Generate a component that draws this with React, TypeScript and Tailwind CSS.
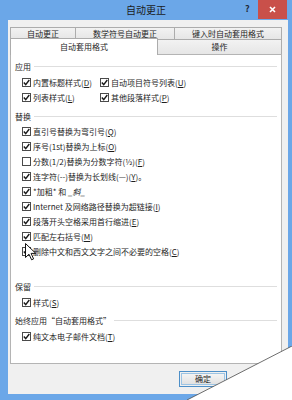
import React from 'react';

const font = { fontFamily: '"Noto Sans CJK SC", "Liberation Sans", sans-serif' };

function Box({ checked = true }: { checked?: boolean }) {
  return (
    <span className="w-[9px] h-[9px] shrink-0 border border-[#4a4a4a] bg-white flex items-center justify-center">
      {checked && (
        <svg width="7" height="7" viewBox="0 0 7 7">
          <path d="M0.8 3.6 L2.7 5.6 L6.3 1" fill="none" stroke="#1a1a1a" strokeWidth="1.4" />
        </svg>
      )}
    </span>
  );
}

function Key({ k }: { k: string }) {
  return (
    <>
      (<span className="underline">{k}</span>)
    </>
  );
}

function Check({ label, k, tail, checked = true, className = '' }: { label: React.ReactNode; k?: string; tail?: string; checked?: boolean; className?: string }) {
  return (
    <div className={`h-[15px] flex items-center gap-[2px] ${className}`}>
      <Box checked={checked} />
      <span className="whitespace-nowrap">
        {label}
        {k && <Key k={k} />}
        {tail}
      </span>
    </div>
  );
}

function Section({ title, className = '' }: { title: string; className?: string }) {
  return (
    <div className={`h-[15px] flex items-center pl-[4px] pr-[4px] ${className}`}>
      <span className="whitespace-nowrap">{title}</span>
      <div className="flex-1 h-px bg-[#dedede] ml-[3px]" />
    </div>
  );
}

function Tab({ label, className = '' }: { label: string; className?: string }) {
  return (
    <div className={`flex items-center justify-center border border-[#acacac] bg-gradient-to-b from-[#f2f2f2] to-[#e6e6e6] ${className}`}>
      {label}
    </div>
  );
}

export default function App() {
  return (
    <div className="relative w-[292px] h-[400px] overflow-hidden bg-[#6ba7e8] flex flex-col text-[#1e1e1e]" style={font}>
      <div className="h-[20px] relative flex items-center justify-center shrink-0">
        <span className="text-[10px] text-[#1b1b1b] leading-none">自动更正</span>
        <span className="absolute left-[245px] top-[4px] text-[9px] font-bold text-[#1f2a3a] leading-none">?</span>
        <div className="absolute left-[258px] top-0 w-[29px] h-[19px] bg-[#c9504a] flex items-center justify-center">
          <svg width="7" height="7" viewBox="0 0 7 7">
            <path d="M1 1 L6 6 M6 1 L1 6" stroke="white" strokeWidth="1.6" />
          </svg>
        </div>
      </div>

      <div className="flex-1 ml-[8px] mr-[4px] mb-[6px] bg-[#f0f0f0] flex flex-col pl-[2px] pr-[6px] pt-[7px] text-[8px] leading-none">
        <div className="flex h-[13px]">
          <Tab label="自动更正" className="w-[66px]" />
          <Tab label="数学符号自动更正" className="w-[100px] -ml-px" />
          <Tab label="键入时自动套用格式" className="flex-1 -ml-px" />
        </div>
        <div className="flex h-[15px] items-end -mt-px">
          <div className="w-[148px] h-[17px] bg-white border border-[#acacac] border-b-0 flex items-center justify-center relative z-10 -mb-px">
            自动套用格式
          </div>
          <Tab label="操作" className="flex-1 h-[15px] -ml-px border-b-0" />
        </div>

        <div className="h-[310px] bg-white border border-[#b4b4b4] flex flex-col pt-[4px]">
          <Section title="应用" />
          <div className="flex mt-[1px] pl-[11px]">
            <div className="w-[78px]">
              <Check label="内置标题样式" k="D" />
              <Check label="列表样式" k="L" />
            </div>
            <div>
              <Check label="自动项目符号列表" k="U" />
              <Check label="其他段落样式" k="P" />
            </div>
          </div>

          <Section title="替换" className="mt-[4px]" />
          <div className="pl-[11px]">
            <Check label="直引号替换为弯引号" k="Q" />
            <Check label="序号(1st)替换为上标" k="O" />
            <Check label="分数(1/2)替换为分数字符(½)" k="F" checked={false} />
            <Check label="连字符(--)替换为长划线(—)" k="Y" tail="。" />
            <Check
              label={
                <>
                  *加粗* 和 <span className="italic">_斜_</span>
                </>
              }
            />
            <Check label="Internet 及网络路径替换为超链接" k="I" />
            <Check label="段落开头空格采用首行缩进" k="E" />
            <Check label="匹配左右括号" k="M" />
            <Check label="删除中文和西文文字之间不必要的空格" k="C" />
          </div>

          <Section title="保留" className="mt-[20px]" />
          <div className="pl-[11px] mt-[1px]">
            <Check label="样式" k="S" />
          </div>
          <Section title="始终应用“自动套用格式”" className="mt-[3px]" />
          <div className="pl-[11px] mt-[1px]">
            <Check label="纯文本电子邮件文档" k="T" />
          </div>
        </div>

        <div className="flex-1 flex items-center justify-end pr-[55px]">
          <div className="w-[48px] h-[16px] border border-[#4d8fc8] p-px">
            <div className="w-full h-full border border-[#9cc4e4] bg-gradient-to-b from-[#f4f4f4] to-[#e2e2e2] flex items-center justify-center">
              确定
            </div>
          </div>
        </div>
      </div>

      <svg className="absolute left-[25px] top-[243px]" width="12" height="18" viewBox="0 0 12 18">
        <path d="M0.5 0.5 L0.5 14.5 L4 11.2 L6.6 16.8 L8.6 15.9 L6.1 10.4 L10.8 10.4 Z" fill="white" stroke="#111" strokeWidth="1" />
      </svg>

      <svg className="absolute left-[186px] top-[346px]" width="106" height="54" viewBox="0 0 106 54">
        <polygon points="106,0 106,54 1,54" fill="white" />
        <line x1="1" y1="54" x2="106" y2="0" stroke="#4a4a4a" strokeWidth="0.8" />
      </svg>
    </div>
  );
}
